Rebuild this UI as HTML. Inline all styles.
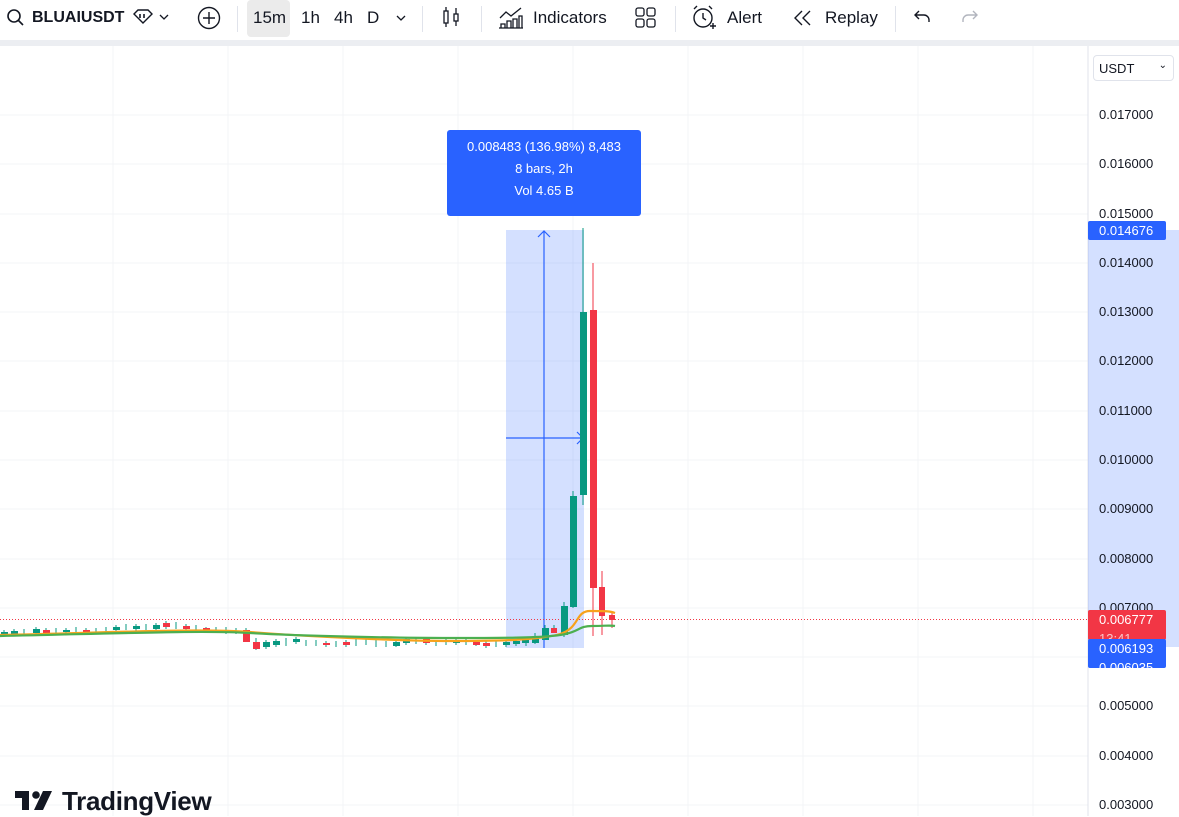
<!DOCTYPE html><html><head><meta charset="utf-8"><style>
body{margin:0;width:1179px;height:816px;overflow:hidden;background:#fff;font-family:"Liberation Sans",sans-serif;position:relative;color:#131722}
.tb{position:absolute;top:0;left:0;width:1179px;height:40px;background:#fff}
.t{position:absolute;top:8px;font-size:17px;line-height:20px}
.sep{position:absolute;top:6px;width:1px;height:26px;background:#e0e3eb}
.bar{position:absolute;top:40px;left:0;width:1179px;height:6px;background:#eceef2}
.ax{position:absolute;left:1099px;font-size:13px;color:#131722}
.lab{position:absolute;left:1088px;width:78px;height:19px;color:#fff;font-size:13px;padding-left:11px;box-sizing:border-box;line-height:19px;border-radius:2px}
</style></head><body>
<div class="tb">
<svg style="position:absolute;left:6px;top:8px" width="20" height="20"><circle cx="8" cy="8" r="6" fill="none" stroke="#131722" stroke-width="1.6"/><path d="M12.5 12.5L17 17" stroke="#131722" stroke-width="1.6"/></svg>
<div class="t" style="left:32px;font-weight:bold;font-size:16px">BLUAIUSDT</div>
<svg style="position:absolute;left:132px;top:8px" width="40" height="20"><path d="M2 6l4-4h10l4 4-9 9z" fill="none" stroke="#131722" stroke-width="1.4"/><path d="M8 6v4M12 6v4" stroke="#131722" stroke-width="1.6"/><path d="M28 7l4 4 4-4" fill="none" stroke="#131722" stroke-width="1.3"/></svg>
<svg style="position:absolute;left:196px;top:5px" width="26" height="26"><circle cx="13" cy="13" r="10.5" fill="none" stroke="#131722" stroke-width="1.4"/><path d="M13 7v12M7 13h12" stroke="#131722" stroke-width="1.4"/></svg>
<div class="sep" style="left:237px"></div>
<div style="position:absolute;left:247px;top:0;width:43px;height:37px;background:#ebebeb;border-radius:4px"></div>
<div class="t" style="left:253px">15m</div><div class="t" style="left:301px">1h</div><div class="t" style="left:334px">4h</div><div class="t" style="left:367px">D</div>
<svg style="position:absolute;left:393px;top:10px" width="16" height="16"><path d="M4 6l4 4 4-4" fill="none" stroke="#131722" stroke-width="1.3"/></svg>
<div class="sep" style="left:422px"></div>
<svg style="position:absolute;left:440px;top:5px" width="22" height="26"><rect x="4" y="6" width="4" height="12" fill="none" stroke="#131722" stroke-width="1.3"/><path d="M6 2v4M6 18v4M16 3v6M16 16v5" stroke="#131722" stroke-width="1.3"/><rect x="14" y="9" width="4" height="7" fill="none" stroke="#131722" stroke-width="1.3"/></svg>
<div class="sep" style="left:481px"></div>
<svg style="position:absolute;left:498px;top:5px" width="26" height="26"><path d="M2 13l6-6 5 4 10-8" fill="none" stroke="#131722" stroke-width="1.3"/><path d="M3 23v-4h4v4M9 23v-7h4v7M15 23v-9h4v9M21 23v-12h3v12M1 23h24" fill="none" stroke="#131722" stroke-width="1.3"/></svg>
<div class="t" style="left:533px">Indicators</div>
<svg style="position:absolute;left:634px;top:6px" width="24" height="24"><rect x="2" y="2" width="8" height="8" rx="2" fill="none" stroke="#131722" stroke-width="1.3"/><rect x="13" y="2" width="8" height="8" rx="2" fill="none" stroke="#131722" stroke-width="1.3"/><rect x="2" y="13" width="8" height="8" rx="2" fill="none" stroke="#131722" stroke-width="1.3"/><rect x="13" y="13" width="8" height="8" rx="2" fill="none" stroke="#131722" stroke-width="1.3"/></svg>
<div class="sep" style="left:675px"></div>
<svg style="position:absolute;left:690px;top:4px" width="28" height="28"><circle cx="13" cy="14" r="9" fill="none" stroke="#131722" stroke-width="1.4"/><path d="M13 9v5l3 2M4 5l3-3M22 5l-3-3M20 22h6M23 19v6" fill="none" stroke="#131722" stroke-width="1.4"/></svg>
<div class="t" style="left:727px">Alert</div>
<svg style="position:absolute;left:792px;top:8px" width="22" height="20"><path d="M10 3l-7 7 7 7M18 3l-7 7 7 7" fill="none" stroke="#131722" stroke-width="1.4"/></svg>
<div class="t" style="left:825px">Replay</div>
<div class="sep" style="left:895px"></div>
<svg style="position:absolute;left:912px;top:7px" width="22" height="20"><path d="M7 4L3 8l4 4M3 8h9a5 5 0 0 1 5 5v2" fill="none" stroke="#131722" stroke-width="1.4"/></svg>
<svg style="position:absolute;left:958px;top:7px" width="22" height="20"><path d="M15 4l4 4-4 4M19 8h-9a5 5 0 0 0-5 5v2" fill="none" stroke="#b2b5be" stroke-width="1.4"/></svg>
</div>
<div class="bar"></div>
<svg style="position:absolute;left:0;top:46px" width="1179" height="770">
<g transform="translate(0,-46)">
<g stroke="#f3f4f7" stroke-width="1">
<path d="M113 46V816M228 46V816M343 46V816M458 46V816M573 46V816M688 46V816M803 46V816M918 46V816M1033 46V816"/>
<path d="M0 115H1088M0 164H1088M0 214H1088M0 263H1088M0 312H1088M0 361H1088M0 411H1088M0 460H1088M0 509H1088M0 559H1088M0 608H1088M0 657H1088M0 706H1088M0 756H1088M0 805H1088"/>
</g>
<path d="M1088 46V816" stroke="#e0e3eb"/>
<rect x="506" y="230" width="78" height="418" fill="#2962ff" fill-opacity="0.2"/>
<rect x="1088" y="230" width="91" height="417" fill="#2962ff" fill-opacity="0.2"/>
<path d="M544 231V648M506 438H583M538 237l6-6 6 6M577 432l6 6-6 6" fill="none" stroke="#2962ff" stroke-width="1.2"/>
<path d="M0 619.5H1088" stroke="#f23645" stroke-dasharray="1 2"/>
<g>
<path d="M4 630v6M14 629v7M24 629v6M36 627v8M46 628v6M56 628v6M66 628v5M76 627v6M86 628v6M96 628v6M106 627v6M116 625v7M126 624v6M136 624v7M146 624v6M156 623v8M166 621v8M176 622v7M186 624v7M196 625v6M206 627v6M216 627v6M226 627v7M236 628v6M246 628v10M256 638v12M266 640v9M276 639v8M286 638v8M296 637v7M306 640v6M316 640v6M326 641v6M336 641v6M346 640v7M356 639v7M366 639v6M376 640v7M386 641v6M396 640v7M406 637v8M416 637v7M426 637v8M436 640v6M446 639v6M456 638v7M466 638v7M476 640v6M486 641v7M496 641v6M506 640v7M516 639v7M526 637v9M535 633v11M545 625v15M554 625v8M564 602v35M573 491v117M583 228v277" stroke="#089981"/>
<g fill="#089981"><rect x="1" y="632" width="7" height="3"/><rect x="11" y="631" width="7" height="3"/><rect x="33" y="629" width="7" height="4"/><rect x="63" y="630" width="7" height="2"/><rect x="113" y="627" width="7" height="3"/><rect x="133" y="626" width="7" height="3"/><rect x="153" y="625" width="7" height="4"/><rect x="263" y="642" width="7" height="5"/><rect x="273" y="641" width="7" height="4"/><rect x="293" y="639" width="7" height="3"/><rect x="393" y="642" width="7" height="4"/><rect x="403" y="639" width="7" height="4"/><rect x="453" y="640" width="7" height="3"/><rect x="503" y="642" width="7" height="3"/><rect x="513" y="641" width="7" height="3"/><rect x="522" y="640" width="7" height="3"/><rect x="532" y="637" width="7" height="6"/><rect x="542" y="628" width="7" height="12"/><rect x="561" y="606" width="7" height="29"/><rect x="570" y="496" width="7" height="111"/><rect x="580" y="312" width="7" height="183"/></g>
<g fill="#f23645"><rect x="43" y="630" width="7" height="3"/><rect x="83" y="630" width="7" height="2"/><rect x="163" y="623" width="7" height="4"/><rect x="183" y="626" width="7" height="3"/><rect x="203" y="628" width="7" height="3"/><rect x="243" y="630" width="7" height="12"/><rect x="253" y="642" width="7" height="7"/><rect x="323" y="643" width="7" height="2"/><rect x="343" y="642" width="7" height="3"/><rect x="423" y="639" width="7" height="4"/><rect x="473" y="642" width="7" height="3"/><rect x="483" y="643" width="7" height="3"/><rect x="551" y="628" width="6" height="5"/><rect x="590" y="310" width="7" height="278"/><rect x="599" y="587" width="6" height="29"/><rect x="609" y="615" width="6" height="5"/></g>
<path d="M593 263v373M602 571v64M612 612v16" stroke="#f23645"/>
</g>
<path d="M0 635C100 633 200 628 250 632S400 641 450 641S540 640 560 634S575 611 590 611S610 611 615 613" fill="none" stroke="#f7a21b" stroke-width="2.2"/>
<path d="M0 636C100 634 200 630 250 633S400 638 450 638S540 638 560 635S578 626 592 626S610 625 615 626" fill="none" stroke="#4caf50" stroke-width="2.2"/>
</g></svg>
<div style="position:absolute;left:447px;top:130px;width:194px;height:86px;background:#2962ff;border-radius:3px;color:#fff;font-size:13px;text-align:center;line-height:22px;padding-top:6px;box-sizing:border-box">0.008483 (136.98%) 8,483<br>8 bars, 2h<br>Vol 4.65 B</div>
<div style="position:absolute;left:1093px;top:55px;width:81px;height:26px;border:1px solid #e0e3eb;border-radius:4px;box-sizing:border-box;font-size:13px;padding:5px 0 0 5px">USDT<span style="position:absolute;right:6px;top:4px;font-size:10px">⌄</span></div>
<div class="ax" style="top:107px">0.017000</div><div class="ax" style="top:156px">0.016000</div><div class="ax" style="top:206px">0.015000</div><div class="ax" style="top:255px">0.014000</div><div class="ax" style="top:304px">0.013000</div><div class="ax" style="top:353px">0.012000</div><div class="ax" style="top:403px">0.011000</div><div class="ax" style="top:452px">0.010000</div><div class="ax" style="top:501px">0.009000</div><div class="ax" style="top:551px">0.008000</div><div class="ax" style="top:600px">0.007000</div><div class="ax" style="top:698px">0.005000</div><div class="ax" style="top:748px">0.004000</div><div class="ax" style="top:797px">0.003000</div>
<div class="lab" style="top:221px;background:#2962ff">0.014676</div>
<div class="lab" style="top:610px;height:30px;background:#f23645;overflow:hidden">0.006777<br><span style="opacity:.7">13:41</span></div>
<div class="lab" style="top:639px;height:29px;background:#2962ff;overflow:hidden">0.006193<br>0.006035</div>
<svg style="position:absolute;left:15px;top:791px" width="38" height="20"><path d="M0 0h14v19H7V7H0z" fill="#131722"/><circle cx="21" cy="4" r="3.8" fill="#131722"/><path d="M28 0h9l-9 19h-9z" fill="#131722"/></svg>
<div style="position:absolute;left:62px;top:786px;font-size:26px;font-weight:bold;color:#131722;letter-spacing:-0.3px">TradingView</div>
</body></html>
